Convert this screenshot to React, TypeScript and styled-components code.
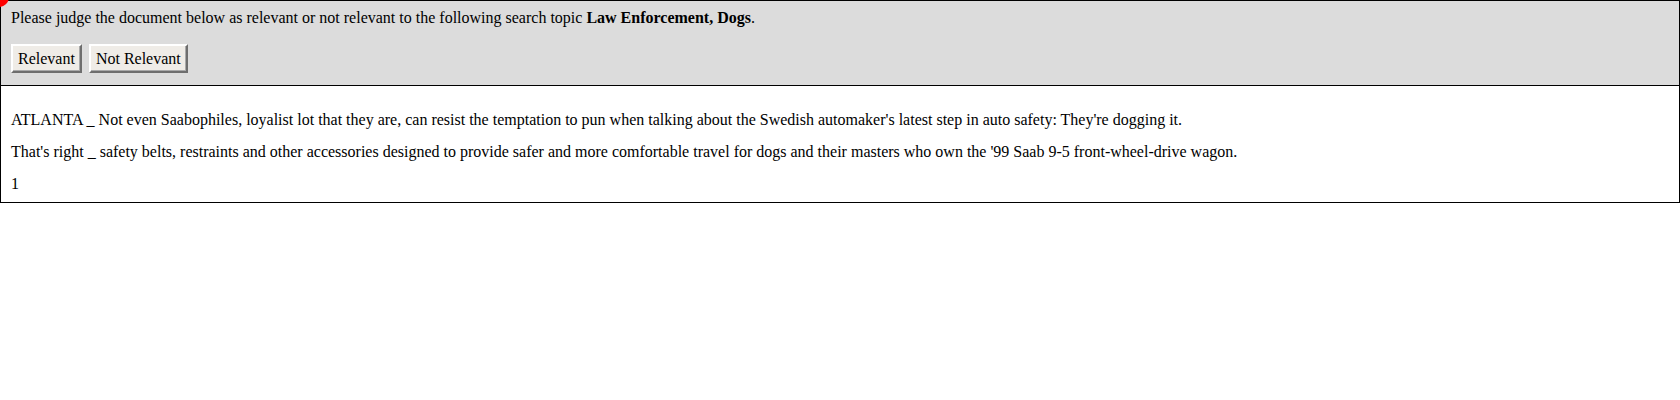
import React from "react";
import styled, { createGlobalStyle } from "styled-components";

const Global = createGlobalStyle`
  html, body { margin: 0; padding: 0; background: #ffffff; }
  body { font-family: "Liberation Serif", "Times New Roman", serif; font-size: 16px; color: #000; }
`;

const Page = styled.div`
  position: relative;
  width: 1680px;
`;

const Marker = styled.div`
  position: absolute;
  left: -11px;
  top: -13px;
  width: 20px;
  height: 20px;
  border-radius: 50%;
  background: #ff0000;
  z-index: 1;
`;

const Header = styled.div`
  border: 1px solid #000;
  background: #dcdcdc;
  padding: 8px 10px 12px;
`;

const Prompt = styled.div`
  line-height: 18px;
`;

const ButtonRow = styled.div`
  display: flex;
  gap: 7px;
  margin-top: 17px;
`;

const JudgeButton = styled.button`
  height: 29px;
  padding: 0 5px;
  font-family: "Liberation Serif", "Times New Roman", serif;
  font-size: 16px;
  color: #000;
  background: #efece7;
  border-style: solid;
  border-width: 2px;
  border-color: #ffffff #6e6e6e #6e6e6e #ffffff;
  box-shadow: inset -1px -1px 0 #a9a9a9;
  cursor: pointer;
`;

const Doc = styled.div`
  border: 1px solid #000;
  border-top: none;
  padding: 25px 10px 9px;
`;

const Para = styled.p`
  margin: 0 0 14px;
  line-height: 18px;
  &:last-child { margin-bottom: 0; }
`;

export default function App() {
  return (
    <Page>
      <Global />
      <Marker />
      <Header>
        <Prompt>
          Please judge the document below as relevant or not relevant to the following search topic{" "}
          <b>Law Enforcement, Dogs</b>.
        </Prompt>
        <ButtonRow>
          <JudgeButton>Relevant</JudgeButton>
          <JudgeButton>Not Relevant</JudgeButton>
        </ButtonRow>
      </Header>
      <Doc>
        <Para>
          ATLANTA _ Not even Saabophiles, loyalist lot that they are, can resist the temptation to pun when talking about the Swedish automaker's latest step in auto safety: They're dogging it.
        </Para>
        <Para>
          That's right _ safety belts, restraints and other accessories designed to provide safer and more comfortable travel for dogs and their masters who own the '99 Saab 9-5 front-wheel-drive wagon.
        </Para>
        <Para>1</Para>
      </Doc>
    </Page>
  );
}
